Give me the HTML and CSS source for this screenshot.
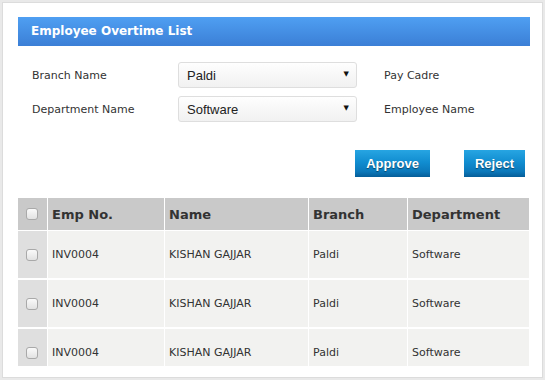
FILE: index.html
```html
<!DOCTYPE html>
<html>
<head>
<meta charset="utf-8">
<link rel="stylesheet" href="styles.css">
</head>
<body>
<div class="panel">
  <div class="title-bar">Employee Overtime List</div>
  <div class="filters">
    <label class="lbl">Branch Name</label>
    <div class="select-wrap"><select class="sel"><option>Paldi</option></select></div>
    <label class="lbl">Pay Cadre</label>
    <label class="lbl">Department Name</label>
    <div class="select-wrap"><select class="sel"><option>Software</option></select></div>
    <label class="lbl">Employee Name</label>
  </div>
  <div class="actions">
    <button class="btn btn-approve">Approve</button>
    <button class="btn btn-reject">Reject</button>
  </div>
  <div class="table-clip">
    <table class="grid">
      <colgroup>
        <col class="c-check"><col class="c-emp"><col class="c-name"><col class="c-branch"><col class="c-dept">
      </colgroup>
      <thead>
        <tr>
          <th class="chk"><span class="box"></span></th>
          <th>Emp No.</th>
          <th>Name</th>
          <th>Branch</th>
          <th>Department</th>
        </tr>
      </thead>
      <tbody>
        <tr>
          <td class="chk"><span class="box"></span></td>
          <td>INV0004</td><td>KISHAN GAJJAR</td><td>Paldi</td><td>Software</td>
        </tr>
        <tr>
          <td class="chk"><span class="box"></span></td>
          <td>INV0004</td><td>KISHAN GAJJAR</td><td>Paldi</td><td>Software</td>
        </tr>
        <tr>
          <td class="chk"><span class="box"></span></td>
          <td>INV0004</td><td>KISHAN GAJJAR</td><td>Paldi</td><td>Software</td>
        </tr>
      </tbody>
    </table>
  </div>
</div>
</body>
</html>
```
FILE: styles.css
```css
* { box-sizing: border-box; }
html, body { margin: 0; padding: 0; }
body {
  background: #e9e9e9;
  font-family: "DejaVu Sans", Verdana, sans-serif;
  color: #333;
  width: 545px;
  height: 380px;
  padding: 2px 2px 2px 2px;
}
.panel {
  background: #fff;
  border: 1px solid #dcdcdc;
  width: 541px;
  height: 376px;
  padding: 14px 12px 0 15px;
  overflow: hidden;
}
.title-bar {
  height: 29px;
  width: 512px;
  background: linear-gradient(#4f9ff2, #3b7fd6);
  color: #fff;
  font-weight: bold;
  font-size: 12px;
  line-height: 29px;
  padding-left: 13px;
}
.filters {
  display: grid;
  grid-template-columns: 119px 179px auto;
  column-gap: 27px;
  row-gap: 8px;
  margin-top: 16px;
  padding-left: 14px;
  align-items: center;
}
.lbl {
  font-size: 11px;
  color: #333;
}
.select-wrap {
  position: relative;
  height: 26px;
}
.select-wrap::after {
  content: "\25BC";
  position: absolute;
  right: 8px;
  top: 8px;
  font-size: 7px;
  color: #111;
  font-family: "DejaVu Sans", sans-serif;
  pointer-events: none;
}
.sel {
  appearance: none;
  -webkit-appearance: none;
  width: 179px;
  height: 26px;
  border: 1px solid #dedede;
  border-radius: 3px;
  background: linear-gradient(#fefefe, #f1f1f1);
  font-family: "Liberation Sans", Arial, sans-serif;
  font-size: 13px;
  color: #222;
  padding: 0 0 0 8px;
  margin: 0;
}
.actions {
  display: flex;
  justify-content: flex-end;
  gap: 34px;
  margin-top: 28px;
  padding-right: 5px;
  width: 512px;
}
.btn {
  height: 27px;
  border: none;
  margin: 0;
  padding: 0;
  color: #fff;
  font-family: "Liberation Sans", Arial, sans-serif;
  font-weight: bold;
  font-size: 13px;
  background: linear-gradient(#27a5e2 0%, #118dd0 45%, #0b78ba 80%, #055d98 100%);
  text-shadow: 0 1px 1px rgba(0,0,0,0.45);
}
.btn-approve { width: 75px; }
.btn-reject { width: 61px; }
.table-clip {
  margin-top: 21px;
  height: 168px;
  width: 511px;
  overflow: hidden;
}
.grid {
  border-collapse: separate;
  border-spacing: 0;
  width: 511px;
  table-layout: fixed;
}
.c-check { width: 30px; }
.c-emp { width: 117px; }
.c-name { width: 144px; }
.c-branch { width: 99px; }
.c-dept { width: 121px; }
.grid th, .grid td {
  border-right: 1px solid #fff;
  text-align: left;
  padding: 0 0 0 4px;
}
.grid th:last-child, .grid td:last-child { border-right: none; }
.grid th {
  background: #c9c9c9;
  height: 33px;
  border-bottom: 1px solid #fff;
  font-size: 13px;
  font-weight: bold;
  color: #333;
}
.grid td {
  background: #f2f2f0;
  height: 49px;
  border-bottom: 2px solid #fff;
  font-size: 11px;
  color: #333;
}
.grid th.chk, .grid td.chk {
  padding: 0 0 0 8px;
}
.grid td.chk { background: #dfdfdf; }
.box {
  display: block;
  width: 12px;
  height: 12px;
  border: 1px solid #a9a9a9;
  border-radius: 3px;
  background: linear-gradient(#fafafa, #e2e2e2);
}
```
